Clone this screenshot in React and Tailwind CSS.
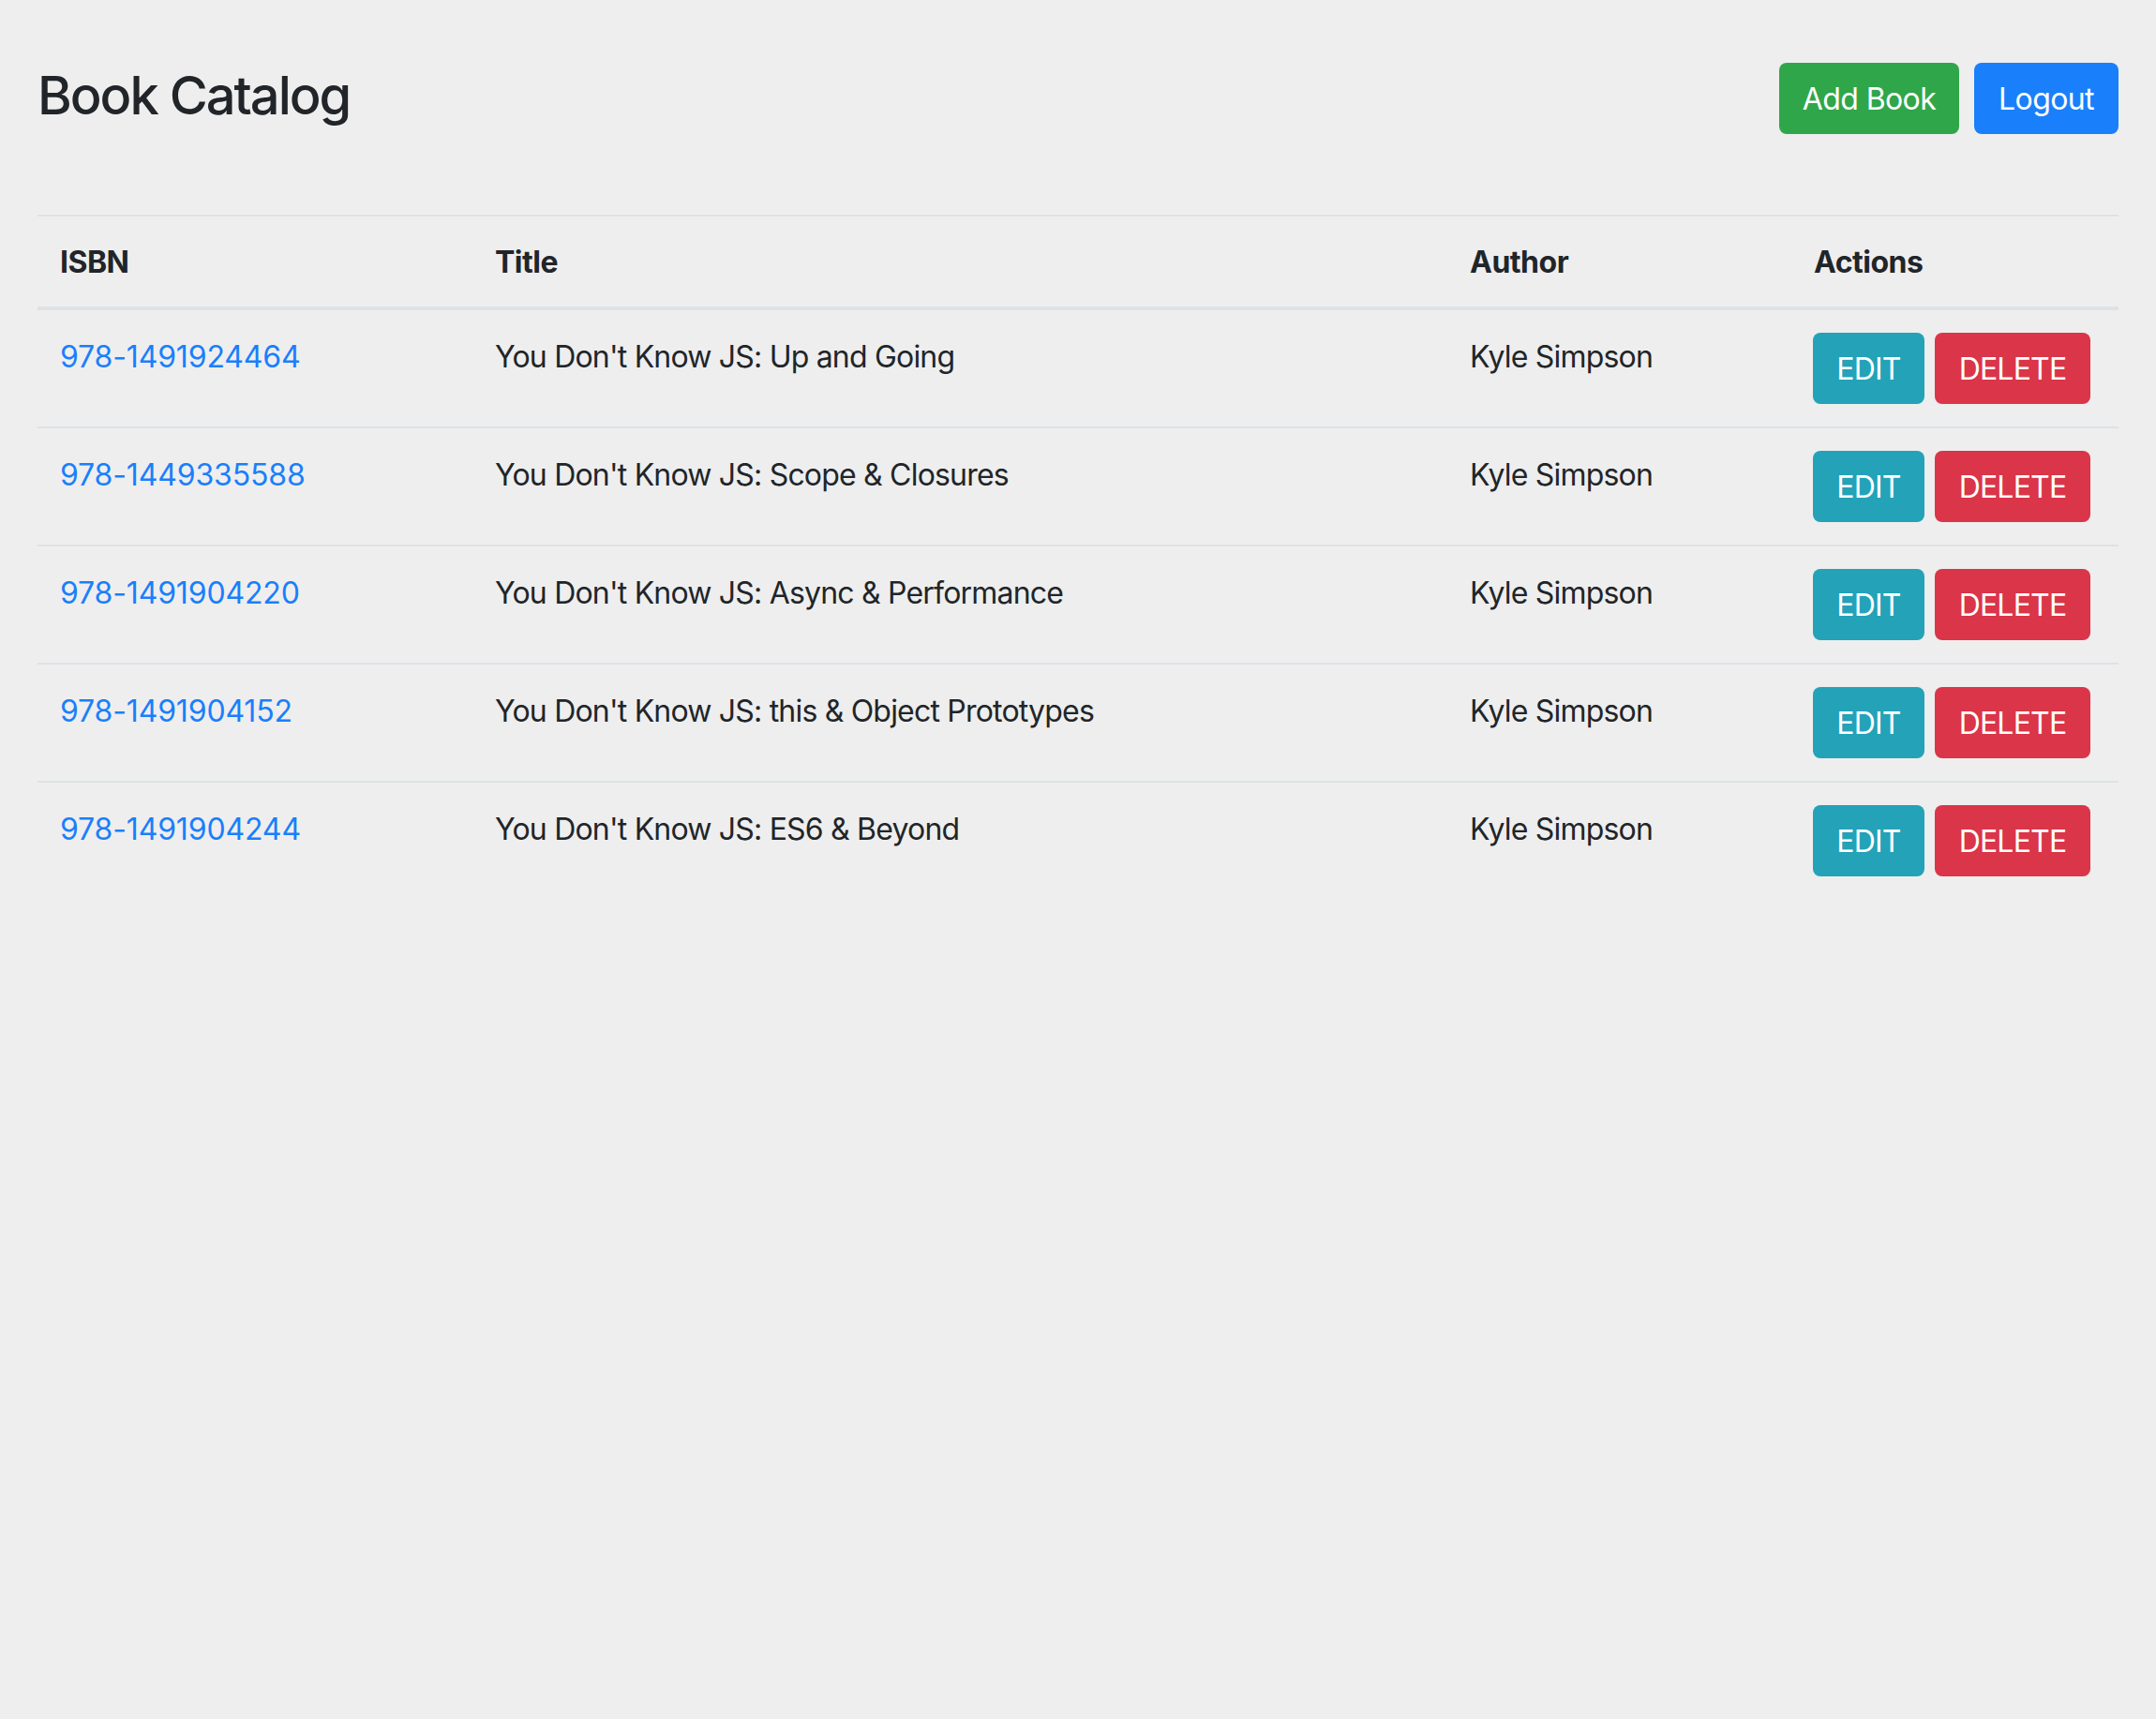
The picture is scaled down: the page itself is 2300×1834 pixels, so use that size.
import React from "react";

const books = [
  { isbn: "978-1491924464", title: "You Don't Know JS: Up and Going", author: "Kyle Simpson" },
  { isbn: "978-1449335588", title: "You Don't Know JS: Scope & Closures", author: "Kyle Simpson" },
  { isbn: "978-1491904220", title: "You Don't Know JS: Async & Performance", author: "Kyle Simpson" },
  { isbn: "978-1491904152", title: "You Don't Know JS: this & Object Prototypes", author: "Kyle Simpson" },
  { isbn: "978-1491904244", title: "You Don't Know JS: ES6 & Beyond", author: "Kyle Simpson" },
];

export default function App() {
  return (
    <div
      className="min-h-screen bg-[#eeeeee] text-[#212529] px-[40px] pt-[67px]"
      style={{ fontFamily: "Inter, 'Noto Sans', 'Liberation Sans', sans-serif" }}
    >
      <div className="flex items-start justify-between">
        <h3 className="mt-[2px] text-[56px] leading-[1.2] font-medium tracking-[-2px]">Book Catalog</h3>
        <div className="flex gap-[16px]">
          <button className="h-[76px] w-[192px] rounded-[8px] bg-[#30a64a] pt-[2px] text-white text-[32px] leading-[48px] tracking-[-0.6px]">
            Add Book
          </button>
          <button className="h-[76px] w-[154px] rounded-[8px] bg-[#1a7ffb] pt-[2px] text-white text-[32px] leading-[48px] tracking-[-0.6px]">
            Logout
          </button>
        </div>
      </div>

      <table className="mt-[86px] w-full table-fixed border-collapse text-[32px] leading-[48px] tracking-[-0.8px]">
        <colgroup>
          <col className="w-[464px]" />
          <col className="w-[1040px]" />
          <col className="w-[367px]" />
          <col className="w-[349px]" />
        </colgroup>
        <thead>
          <tr className="border-t-2 border-b-4 border-[#dee2e6]">
            <th className="text-left font-bold tracking-[-0.5px] px-[24px] pt-[25px] pb-[23px]">ISBN</th>
            <th className="text-left font-bold tracking-[-0.5px] px-[24px] pt-[25px] pb-[23px]">Title</th>
            <th className="text-left font-bold tracking-[-0.5px] px-[24px] pt-[25px] pb-[23px]">Author</th>
            <th className="text-left font-bold tracking-[-0.5px] px-[24px] pt-[25px] pb-[23px]">Actions</th>
          </tr>
        </thead>
        <tbody>
          {books.map((b, i) => (
            <tr key={b.isbn} className={i === 0 ? "" : "border-t-2 border-[#dee2e6]"}>
              <td className="align-top px-[24px] pt-[26px] pb-[22px]">
                <a className="text-[#1a7ffb] tracking-[-0.15px]" href="#">{b.isbn}</a>
              </td>
              <td className="align-top px-[24px] pt-[26px] pb-[22px] whitespace-nowrap">{b.title}</td>
              <td className="align-top px-[24px] pt-[26px] pb-[22px] whitespace-nowrap">{b.author}</td>
              <td className="align-top px-[24px] py-[24px]">
                <div className="flex gap-[11px] -ml-[1px]">
                  <button className="h-[76px] w-[119px] rounded-[8px] bg-[#23a2b8] pt-[2px] text-white text-[32px] leading-[48px]">
                    EDIT
                  </button>
                  <button className="h-[76px] w-[166px] rounded-[8px] bg-[#da3548] pt-[2px] text-white text-[32px] leading-[48px]">
                    DELETE
                  </button>
                </div>
              </td>
            </tr>
          ))}
        </tbody>
      </table>
    </div>
  );
}
